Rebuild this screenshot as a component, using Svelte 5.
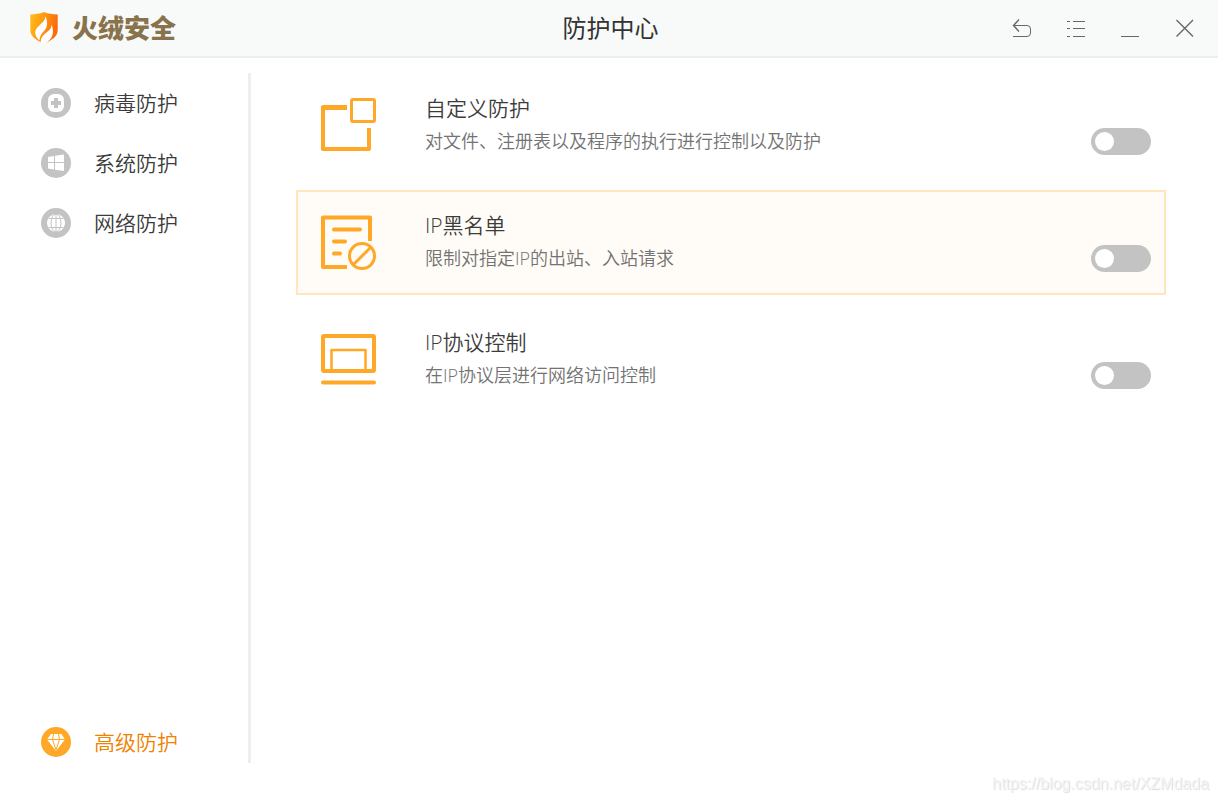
<script>
  let active = $state('advanced');
  let nav = [
    { id: 'virus', label: '病毒防护' },
    { id: 'system', label: '系统防护' },
    { id: 'network', label: '网络防护' },
    { id: 'advanced', label: '高级防护' },
  ];
  let items = $state([
    { id: 'custom', title: '自定义防护', desc: '对文件、注册表以及程序的执行进行控制以及防护', on: false },
    { id: 'blacklist', title: 'IP黑名单', desc: '限制对指定IP的出站、入站请求', on: false },
    { id: 'protocol', title: 'IP协议控制', desc: '在IP协议层进行网络访问控制', on: false },
  ]);
  let current = $state('blacklist');
</script>

<div class="window">
  <header>
    <div class="brand">
      <svg width="28" height="32" viewBox="0 0 28 32">
        <defs>
          <linearGradient id="shield" x1="0" y1="0" x2="1" y2="0.3">
            <stop offset="0" stop-color="#ffc01c" />
            <stop offset="0.5" stop-color="#ff9a10" />
            <stop offset="1" stop-color="#fb6a0c" />
          </linearGradient>
        </defs>
        <path fill="url(#shield)" d="M14 0C10 1.8 5 2.4 0.3 2.4V18c0 6 5 10 13.7 13.6C22.7 28 27.7 24 27.7 18V2.4C23 2.4 18 1.8 14 0z" />
        <path fill="#fff" d="M15.5 4.5c-.8 4.5-3 6-6 8.7C6.5 16 5 18 5.2 21c.2 3 1.8 5 4.3 7.5.2-4 1.5-6.3 4.5-9.5 3.2-3.4 4.3-8 1.5-14.5z" />
        <path fill="#fff" d="M21.5 12.5c.2 3-1.3 5-4.5 7.5-4 3-6.5 6-6.3 10.7l3.3 1.3C19 29.5 22 26 22.7 22c.5-3 .1-6.5-1.2-9.5z" />
      </svg>
      <span>火绒安全</span>
    </div>
    <h1>防护中心</h1>
    <div class="controls">
      <button aria-label="返回">
        <svg width="24" height="24" viewBox="0 0 24 24">
          <path d="M9 3.5L3.5 9.5L9 15.5" stroke-width="1.4" />
          <path d="M3.5 9.5H17a3.5 3.5 0 0 1 3.5 3.5V17a3.5 3.5 0 0 1-3.5 3.5H3" />
        </svg>
      </button>
      <button aria-label="菜单">
        <svg width="24" height="24" viewBox="0 0 24 24">
          <path d="M3 5.5h3M9 5.5h12M3 12.5h3M9 12.5h12M3 20.5h3M9 20.5h12" />
        </svg>
      </button>
      <button aria-label="最小化">
        <svg width="24" height="24" viewBox="0 0 24 24"><path d="M3 20.5h18" /></svg>
      </button>
      <button aria-label="关闭">
        <svg width="24" height="24" viewBox="0 0 24 24">
          <path stroke-width="1.4" d="M4.5 4L21 20.5M21 4L4.5 20.5" />
        </svg>
      </button>
    </div>
  </header>

  <div class="body">
    <nav>
      {#each nav as entry}
        <button class:active={active === entry.id} class:last={entry.id === 'advanced'} onclick={() => (active = entry.id)}>
          <svg width="30" height="30" viewBox="0 0 30 30">
            <circle cx="15" cy="15" r="15" fill="currentColor" />
            {#if entry.id === 'virus'}
              <rect x="7" y="6" width="16" height="18" rx="6" fill="#fff" />
              <path fill="currentColor" d="M13 10h4v3h3v4h-3v3h-4v-3h-3v-4h3z" />
            {:else if entry.id === 'system'}
              <path fill="#fff" d="M7 9l6-1v6H7zM14 7.8L23 6.5V14h-9zM7 15h6v6.5l-6-1zM14 15h9v8l-9-1.3z" />
            {:else if entry.id === 'network'}
              <circle cx="15" cy="15" r="9" fill="#fff" />
              <g fill="none" stroke="currentColor">
                <ellipse cx="15" cy="15" rx="5" ry="9" />
                <path d="M15 6v18M8 10.5h14M8 19.5h14" />
              </g>
            {:else}
              <path fill="#fff" d="M10 7h10.5l3.5 5.5L15 24L6 12.5z" />
              <path fill="none" stroke="currentColor" d="M6 12.5h18M12.5 7l-1 5.5L15 23l3.5-10.5-1-5.5" />
            {/if}
          </svg>
          <span>{entry.label}</span>
        </button>
      {/each}
    </nav>

    <main>
      {#each items as item}
        <!-- svelte-ignore a11y_no_static_element_interactions -->
        <section class:current={current === item.id} onmouseenter={() => (current = item.id)}>
          <svg class="art" width="55" height="55" viewBox="0 0 55 55">
            {#if item.id === 'custom'}
              <path stroke-width="4" stroke-linejoin="round" d="M26 9H2V51H48V30" />
              <path stroke-width="5" d="M4 9.5H26" />
              <rect x="30.5" y="1.5" width="23" height="22" rx="1.5" stroke-width="3" />
            {:else if item.id === 'blacklist'}
              <path stroke-width="4" stroke-linejoin="round" d="M26 52H2V2.5H49V26" />
              <path stroke-width="4" stroke-linecap="round" d="M13 14.5H39M13 26.5H24M13 38.5H19" />
              <circle cx="41" cy="41" r="12.5" stroke-width="3" />
              <path stroke-width="3" d="M32.5 49.5L49.5 32.5" />
            {:else}
              <rect x="2" y="4" width="51" height="35" rx="1" stroke-width="4" />
              <path stroke-width="2.5" stroke-linejoin="round" d="M10.5 38V18H44.5V38" />
              <path stroke-width="4" stroke-linecap="round" d="M2 50.5H53" />
            {/if}
          </svg>
          <div class="text">
            <label for={item.id}>{item.title}</label>
            <p>{item.desc}</p>
          </div>
          <input id={item.id} type="checkbox" role="switch" bind:checked={item.on} />
        </section>
      {/each}
    </main>
  </div>

  <span class="watermark">https://blog.csdn.net/XZMdada</span>
</div>

<style>
  :global(body) {
    margin: 0;
    background: #fff;
  }
  .window {
    display: flex;
    flex-direction: column;
    min-height: 100vh;
    font-family: "Open Sans", "Noto Sans CJK SC", sans-serif;
    font-weight: 350;
    color: #333;
  }
  button {
    padding: 0;
    border: none;
    background: none;
    font: inherit;
    cursor: pointer;
  }
  header {
    display: grid;
    grid-template-columns: 1fr auto 1fr;
    align-items: center;
    height: 56px;
    padding: 0 7px 0 10px;
    background: #f8faf9;
    border-bottom: 2px solid #eee;
  }
  .brand {
    display: flex;
    align-items: center;
    gap: 14px;
    padding-left: 20px;
    font-size: 26px;
    font-weight: 900;
    line-height: 32px;
    color: #88734c;
  }
  h1 {
    margin: 0;
    font-size: 24px;
    font-weight: 400;
    line-height: 32px;
  }
  .controls {
    display: flex;
    justify-content: flex-end;
  }
  .controls button {
    display: flex;
    justify-content: center;
    width: 54px;
  }
  .controls svg {
    fill: none;
    stroke: #666;
  }
  .body {
    flex: 1;
    display: flex;
    padding: 15px 52px 39px 0;
  }
  nav {
    display: flex;
    flex-direction: column;
    gap: 30px;
    box-sizing: border-box;
    width: 251px;
    padding: 15px 0 6px 41px;
    border-right: 3px solid #eee;
  }
  nav button {
    display: flex;
    align-items: center;
    gap: 23px;
    height: 30px;
    font-size: 21px;
    line-height: 30px;
    color: #3c3c3c;
  }
  nav svg {
    color: #c3c3c3;
  }
  nav .last {
    margin-top: auto;
  }
  nav .active {
    color: #f08200;
  }
  nav .active svg {
    color: #ffa726;
  }
  main {
    flex: 1;
    display: flex;
    flex-direction: column;
    gap: 12px;
    padding-left: 45px;
  }
  section {
    display: flex;
    padding: 18px 13px 21px 23px;
    border: 2px solid transparent;
  }
  .current {
    background: #fffcf7;
    border-color: #ffe6bf;
  }
  .art {
    margin-top: 5px;
    fill: none;
    stroke: #ffa726;
  }
  .text {
    flex: 1;
    display: flex;
    flex-direction: column;
    gap: 6px;
    margin-left: 49px;
  }
  label {
    font-size: 21px;
    line-height: 30px;
    color: #3c3c3c;
  }
  p {
    margin: 0;
    font-size: 18px;
    line-height: 24px;
    padding-bottom: 2px;
    color: #737373;
  }
  input {
    align-self: flex-end;
    appearance: none;
    box-sizing: border-box;
    width: 60px;
    height: 27px;
    margin: 0;
    padding: 4px;
    border-radius: 14px;
    background: #c3c3c3;
    cursor: pointer;
  }
  input::before {
    content: "";
    display: block;
    width: 19px;
    height: 19px;
    border-radius: 50%;
    background: #fff;
  }
  input:checked {
    background: #ffa726;
  }
  input:checked::before {
    margin-left: auto;
  }
  .watermark {
    position: fixed;
    right: 9px;
    bottom: 8px;
    font-family: "Liberation Sans", Arial, sans-serif;
    font-size: 16px;
    font-weight: 400;
    line-height: 20px;
    color: #f4f4f4;
    text-shadow: 1px 1px 1px #ddd;
    pointer-events: none;
  }
</style>
